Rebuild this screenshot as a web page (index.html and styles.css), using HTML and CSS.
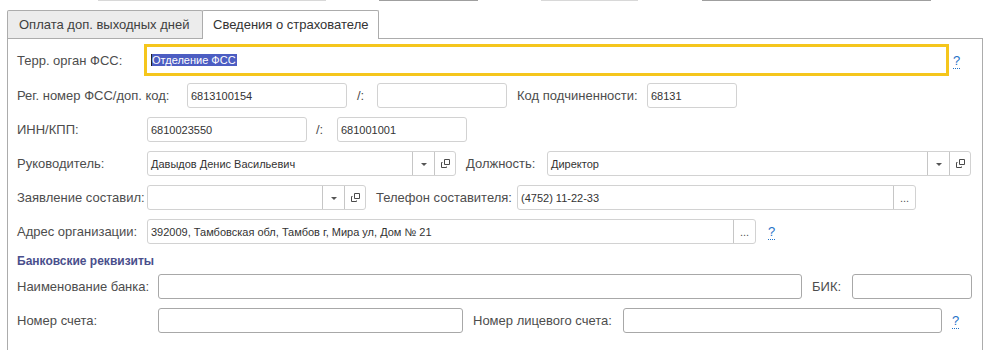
FILE: index.html
```html
<!DOCTYPE html>
<html lang="ru">
<head>
<meta charset="utf-8">
<link rel="stylesheet" href="styles.css">
</head>
<body>
<div class="strip">
  <span class="seg light s1"></span>
  <span class="seg dark s2"></span>
  <span class="seg light s3"></span>
  <span class="seg dark s4"></span>
</div>
<div class="tabs">
  <div class="tab">Оплата доп. выходных дней</div>
  <div class="tab active">Сведения о страхователе</div>
</div>
<div class="panel">
  <div class="row r1">
    <div class="lbl w127">Терр. орган ФСС:</div>
    <div class="focus"><span class="sel">Отделение ФСС</span></div>
    <span class="help h1">?</span>
  </div>

  <div class="row r2">
    <div class="lbl w170">Рег. номер ФСС/доп. код:</div>
    <div class="inp" style="width:160px">6813100154</div>
    <div class="lbl sep w20">/:</div>
    <div class="inp" style="width:130px"></div>
    <div class="lbl gap w130">Код подчиненности:</div>
    <div class="inp" style="width:90px">68131</div>
  </div>

  <div class="row">
    <div class="lbl w130">ИНН/КПП:</div>
    <div class="inp" style="width:160px">6810023550</div>
    <div class="lbl sep9 w21">/:</div>
    <div class="inp" style="width:130px">681001001</div>
  </div>

  <div class="row">
    <div class="lbl w130">Руководитель:</div>
    <div class="inp combo" style="width:309px">
      <span class="txt">Давыдов Денис Васильевич</span>
      <span class="btn drop"><i class="tri"></i></span>
      <span class="btn open"><svg width="11" height="11" viewBox="0 0 11 11"><path d="M4.5 1.5h5v5h-5z" fill="none" stroke="#4a4a4a"/><path d="M2.5 4.5h-1v5h5v-1" fill="none" stroke="#4a4a4a"/></svg></span>
    </div>
    <div class="lbl gap w81">Должность:</div>
    <div class="inp combo" style="width:424px">
      <span class="txt">Директор</span>
      <span class="btn drop"><i class="tri"></i></span>
      <span class="btn open"><svg width="11" height="11" viewBox="0 0 11 11"><path d="M4.5 1.5h5v5h-5z" fill="none" stroke="#4a4a4a"/><path d="M2.5 4.5h-1v5h5v-1" fill="none" stroke="#4a4a4a"/></svg></span>
    </div>
  </div>

  <div class="row">
    <div class="lbl w130">Заявление составил:</div>
    <div class="inp combo" style="width:219px">
      <span class="txt"></span>
      <span class="btn drop"><i class="tri"></i></span>
      <span class="btn open"><svg width="11" height="11" viewBox="0 0 11 11"><path d="M4.5 1.5h5v5h-5z" fill="none" stroke="#4a4a4a"/><path d="M2.5 4.5h-1v5h5v-1" fill="none" stroke="#4a4a4a"/></svg></span>
    </div>
    <div class="lbl gap w141">Телефон составителя:</div>
    <div class="inp combo" style="width:399px">
      <span class="txt">(4752) 11-22-33</span>
      <span class="btn dots">...</span>
    </div>
  </div>

  <div class="row">
    <div class="lbl w130">Адрес организации:</div>
    <div class="inp combo" style="width:609px">
      <span class="txt">392009, Тамбовская обл, Тамбов г, Мира ул, Дом № 21</span>
      <span class="btn dots">...</span>
    </div>
    <span class="help h6">?</span>
  </div>

  <div class="section">Банковские реквизиты</div>

  <div class="row r7">
    <div class="lbl w141">Наименование банка:</div>
    <div class="inp dark" style="width:644px"></div>
    <div class="lbl gap w40">БИК:</div>
    <div class="inp dark" style="width:120px"></div>
  </div>

  <div class="row">
    <div class="lbl w141">Номер счета:</div>
    <div class="inp dark" style="width:305px"></div>
    <div class="lbl gap w150">Номер лицевого счета:</div>
    <div class="inp dark" style="width:319px"></div>
    <span class="help h8">?</span>
  </div>
</div>
</body>
</html>
```
FILE: styles.css
```css
* { box-sizing: border-box; }
html, body { margin: 0; padding: 0; background: #fff; }
body {
  width: 998px;
  height: 350px;
  overflow: hidden;
  font-family: "Liberation Sans", Arial, sans-serif;
  font-size: 13px;
  color: #4d4d4d;
}

.strip { height: 10px; display: flex; align-items: flex-start; }
.seg { display: block; height: 1px; }
.seg.light { background: #d8d8d8; }
.seg.dark { background: #9f9f9f; }
.s1 { margin-left: 98px; width: 228px; }
.s2 { margin-left: 53px; width: 99px; }
.s3 { margin-left: 63px; width: 97px; }
.s4 { margin-left: 64px; width: 229px; }

.tabs {
  display: flex;
  align-items: flex-start;
  height: 29px;
  margin-left: 7px;
}
.tab {
  height: 28px;
  border: 1px solid #acacac;
  border-bottom: none;
  border-radius: 2px 2px 0 0;
  background: #ececec;
  color: #404040;
  padding-left: 11px;
  line-height: 27px;
  width: 196px;
}
.tab.active {
  position: relative;
  z-index: 1;
  margin-left: -1px;
  height: 29px;
  width: 177px;
  background: #fff;
  padding-left: 10px;
  color: #333;
}

.panel {
  margin-top: -1px;
  margin-left: 7px;
  width: 976px;
  height: 312px;
  border: 1px solid #acacac;
  border-bottom: none;
  padding: 5px 0 0 9px;
}

.row {
  display: flex;
  align-items: center;
  height: 25px;
  margin-top: 9px;
}
.row.r1 { height: 32px; margin-top: 0; }
.row.r2 { margin-top: 7px; }
.row.r7 { margin-top: 6px; }

.lbl { white-space: nowrap; flex: none; }
.w20 { width: 20px; }
.w21 { width: 21px; }
.w40 { width: 40px; }
.w81 { width: 81px; }
.w127 { width: 127px; }
.w130 { width: 130px; }
.w141 { width: 141px; }
.w150 { width: 150px; }
.w170 { width: 170px; }
.gap { margin-left: 10px; }
.sep { margin-left: 10px; }
.sep9 { margin-left: 9px; }

.focus {
  width: 805px;
  height: 32px;
  border: 3px solid #f5c61c;
  padding-left: 4px;
  display: flex;
  align-items: center;
  font-size: 11px;
  flex: none;
}
.sel {
  background: #4c5dc2;
  color: #fff;
  line-height: 12px;
  height: 12px;
  padding-right: 1px;
  border-left: 1px solid #222;
}

.inp {
  flex: none;
  height: 25px;
  border: 1px solid #d2d2d2;
  border-radius: 3px;
  padding-left: 3px;
  font-size: 11px;
  color: #333;
  display: flex;
  align-items: center;
  white-space: nowrap;
  overflow: hidden;
}
.inp.dark { border-color: #a8a8a8; }
.inp.combo { padding-left: 0; align-items: stretch; }
.combo .txt {
  flex: 1;
  padding-left: 3px;
  display: flex;
  align-items: center;
}
.btn {
  flex: none;
  display: flex;
  align-items: center;
  justify-content: center;
  border-left: 1px solid #c6c6c6;
}
.btn.drop { width: 22px; }
.btn.open { width: 21px; }
.btn.dots {
  width: 22px;
  color: #555;
  font-size: 11px;
  align-items: flex-end;
  padding-bottom: 5px;
  letter-spacing: 0;
}
.tri {
  display: block;
  width: 0;
  height: 0;
  border-left: 3px solid transparent;
  border-right: 3px solid transparent;
  border-top: 3px solid #555;
  margin-top: 1px;
}

.help {
  flex: none;
  color: #1f72c7;
  font-size: 13px;
  line-height: 13px;
  border-bottom: 1px dotted #1f72c7;
  height: 15px;
  margin-top: 2px;
}
.h1 { margin-left: 4px; }
.h6 { margin-left: 12px; }
.h8 { margin-left: 10px; }

.section {
  margin-top: 10px;
  height: 14px;
  line-height: 14px;
  font-size: 12px;
  font-weight: bold;
  color: #4a4f8c;
}
```
